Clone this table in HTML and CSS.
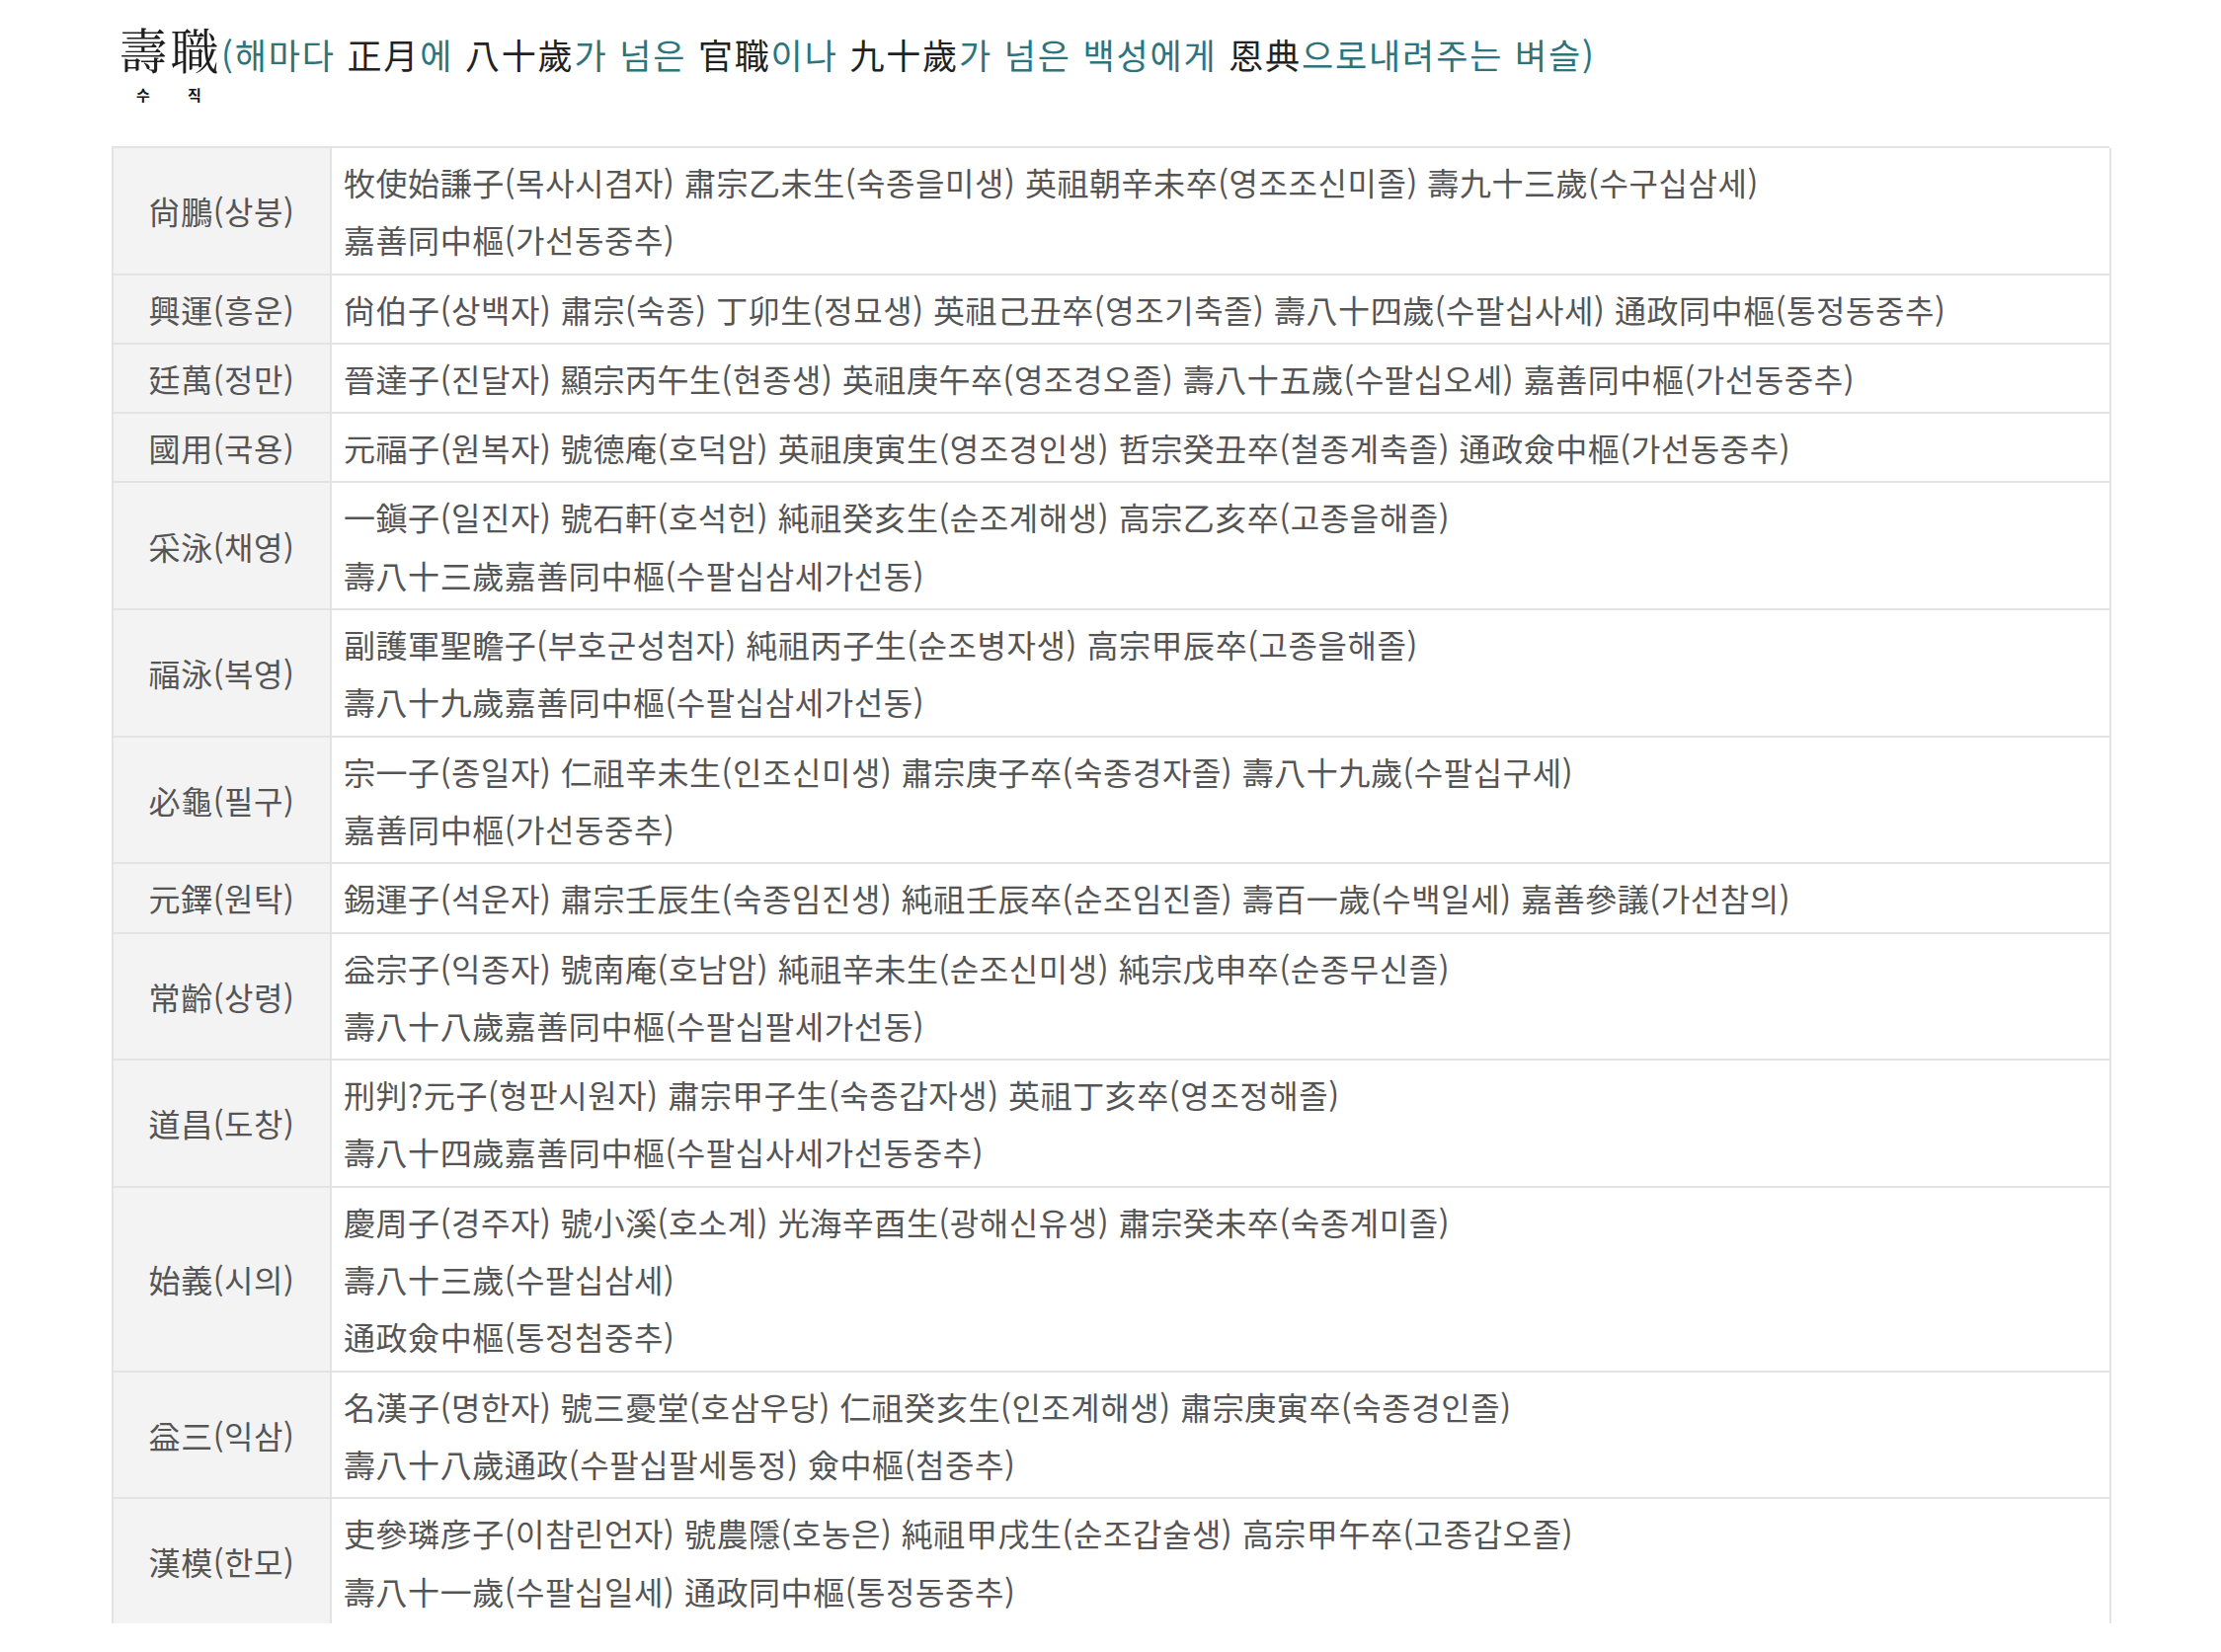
FILE: index.html
```html
<!DOCTYPE html>
<html lang="ko">
<head>
<meta charset="utf-8">
<title>壽職</title>
<link rel="stylesheet" href="styles.css">
</head>
<body>
<div class="page">
  <h1 class="title"><span class="hj"><span class="base">壽</span><span class="rd">수</span></span><span class="hj"><span class="base">職</span><span class="rd">직</span></span><span class="teal">(해마다 <b>正月</b>에 <b>八十歲</b>가 넘은 <b>官職</b>이나 <b>九十歲</b>가 넘은 백성에게 <b>恩典</b>으로내려주는 벼슬)</span></h1>

  <div class="tbl">
    <div class="lab">尙鵬(상붕)</div>
    <div class="val"><div>牧使始謙子(목사시겸자) 肅宗乙未生(숙종을미생) 英祖朝辛未卒(영조조신미졸) 壽九十三歲(수구십삼세)</div><div>嘉善同中樞(가선동중추)</div></div>

    <div class="lab">興運(흥운)</div>
    <div class="val"><div>尙伯子(상백자) 肅宗(숙종) 丁卯生(정묘생) 英祖己丑卒(영조기축졸) 壽八十四歲(수팔십사세) 通政同中樞(통정동중추)</div></div>

    <div class="lab">廷萬(정만)</div>
    <div class="val"><div>晉達子(진달자) 顯宗丙午生(현종생) 英祖庚午卒(영조경오졸) 壽八十五歲(수팔십오세) 嘉善同中樞(가선동중추)</div></div>

    <div class="lab">國用(국용)</div>
    <div class="val"><div>元福子(원복자) 號德庵(호덕암) 英祖庚寅生(영조경인생) 哲宗癸丑卒(철종계축졸) 通政僉中樞(가선동중추)</div></div>

    <div class="lab">采泳(채영)</div>
    <div class="val"><div>一鎭子(일진자) 號石軒(호석헌) 純祖癸亥生(순조계해생) 高宗乙亥卒(고종을해졸)</div><div>壽八十三歲嘉善同中樞(수팔십삼세가선동)</div></div>

    <div class="lab">福泳(복영)</div>
    <div class="val"><div>副護軍聖瞻子(부호군성첨자) 純祖丙子生(순조병자생) 高宗甲辰卒(고종을해졸)</div><div>壽八十九歲嘉善同中樞(수팔십삼세가선동)</div></div>

    <div class="lab">必龜(필구)</div>
    <div class="val"><div>宗一子(종일자) 仁祖辛未生(인조신미생) 肅宗庚子卒(숙종경자졸) 壽八十九歲(수팔십구세)</div><div>嘉善同中樞(가선동중추)</div></div>

    <div class="lab">元鐸(원탁)</div>
    <div class="val"><div>錫運子(석운자) 肅宗壬辰生(숙종임진생) 純祖壬辰卒(순조임진졸) 壽百一歲(수백일세) 嘉善參議(가선참의)</div></div>

    <div class="lab">常齡(상령)</div>
    <div class="val"><div>益宗子(익종자) 號南庵(호남암) 純祖辛未生(순조신미생) 純宗戊申卒(순종무신졸)</div><div>壽八十八歲嘉善同中樞(수팔십팔세가선동)</div></div>

    <div class="lab">道昌(도창)</div>
    <div class="val"><div>刑判?元子(형판시원자) 肅宗甲子生(숙종갑자생) 英祖丁亥卒(영조정해졸)</div><div>壽八十四歲嘉善同中樞(수팔십사세가선동중추)</div></div>

    <div class="lab">始義(시의)</div>
    <div class="val"><div>慶周子(경주자) 號小溪(호소계) 光海辛酉生(광해신유생) 肅宗癸未卒(숙종계미졸)</div><div>壽八十三歲(수팔십삼세)</div><div>通政僉中樞(통정첨중추)</div></div>

    <div class="lab">益三(익삼)</div>
    <div class="val"><div>名漢子(명한자) 號三憂堂(호삼우당) 仁祖癸亥生(인조계해생) 肅宗庚寅卒(숙종경인졸)</div><div>壽八十八歲通政(수팔십팔세통정) 僉中樞(첨중추)</div></div>

    <div class="lab">漢模(한모)</div>
    <div class="val"><div>吏參璘彦子(이참린언자) 號農隱(호농은) 純祖甲戌生(순조갑술생) 高宗甲午卒(고종갑오졸)</div><div>壽八十一歲(수팔십일세) 通政同中樞(통정동중추)</div></div>
  </div>
</div>
</body>
</html>
```

FILE: styles.css
```css
* { box-sizing: border-box; }

html, body {
  margin: 0;
  padding: 0;
  background: #ffffff;
}

body {
  font-family: "Noto Sans CJK KR", "Noto Sans", sans-serif;
  color: #555555;
}

.page {
  padding-left: 113px;
  height: 1644px;
  overflow: hidden;
}

.title {
  margin: 0 0 43px 6px;
  padding-top: 24px;
  font-weight: 400;
  font-size: 35px;
  line-height: 50px;
  white-space: nowrap;
  color: #222222;
}

.hj {
  display: inline-flex;
  flex-direction: column;
  align-items: center;
}

.hj .base {
  font-family: "Noto Serif CJK KR", "Noto Sans CJK KR", serif;
  font-size: 49px;
  line-height: 50px;
  color: #1e1e1e;
  width: 52px;
  text-align: center;
}

.hj .rd {
  margin-top: 13px;
  font-size: 15px;
  line-height: 18px;
  font-weight: 700;
  color: #161616;
}

.teal {
  color: #2d747c;
  letter-spacing: 1.85px;
  margin-left: 1px;
}

.teal b {
  font-weight: 400;
  color: #222222;
}

.tbl {
  display: grid;
  grid-template-columns: 221px 1802px;
  border-top: 2px solid #e3e3e3;
  border-left: 2px solid #e3e3e3;
  width: 2023px;
  font-size: 32px;
  line-height: 58.3px;
  letter-spacing: 0.55px;
}

.lab,
.val {
  border-right: 2px solid #e3e3e3;
  border-bottom: 2px solid #e3e3e3;
  padding: 5px 0;
}

.lab {
  background: #f3f3f3;
  display: flex;
  align-items: center;
  justify-content: center;
  white-space: nowrap;
}

.val {
  padding-left: 12px;
  white-space: nowrap;
}
```
